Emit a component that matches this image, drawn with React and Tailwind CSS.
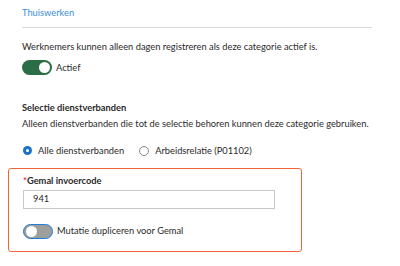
export default function App() {
  return (
    <div className="w-[400px] h-[266px] bg-white text-[#2a2a2a] text-[9.3px] font-['Lato',sans-serif] px-[22px] overflow-hidden">
      <div className="pt-[6px] pb-[7px] border-b border-[#d9d9d9] mr-[6px] leading-[14px]">
        <span className="text-[#3a8ed6]">Thuiswerken</span>
      </div>
      <p className="mt-[12px] leading-[14px]">Werknemers kunnen alleen dagen registreren als deze categorie actief is.</p>
      <div className="mt-[6px] flex items-center gap-[4px]">
        <span className="w-[30px] h-[15px] rounded-full bg-[#2b6e45] flex items-center justify-end pr-[2px]">
          <span className="w-[11px] h-[11px] rounded-full bg-white" />
        </span>
        <span>Actief</span>
      </div>
      <p className="mt-[26px] font-bold leading-[14px]">Selectie dienstverbanden</p>
      <p className="mt-[2px] leading-[14px]">Alleen dienstverbanden die tot de selectie behoren kunnen deze categorie gebruiken.</p>
      <div className="mt-[13px] flex items-center">
        <span className="w-[9px] h-[9px] rounded-full bg-[#1a73c8] flex items-center justify-center ml-[1px]">
          <span className="w-[3px] h-[3px] rounded-full bg-white" />
        </span>
        <span className="ml-[6px]">Alle dienstverbanden</span>
        <span className="ml-[15px] w-[10px] h-[10px] rounded-full border border-[#888] bg-white" />
        <span className="ml-[6px]">Arbeidsrelatie (P01102)</span>
      </div>
      <div className="mt-[10px] -ml-[14px] w-[294px] h-[84px] border border-[#f4623a] rounded-[3px] pl-[14px] pt-[5px]">
        <p className="font-bold leading-[14px]"><span className="text-[#e0314a]">*</span>Gemal invoercode</p>
        <div className="mt-[2px] w-[252px] h-[19px] border border-[#c8c8c8] flex items-center pl-[9px]">941</div>
        <div className="mt-[15px] flex items-center gap-[4px]">
          <span className="w-[30px] h-[15px] rounded-full bg-[#9e9e9e] border-[1.5px] border-[#1e7ed6] flex items-center pl-[1.5px]">
            <span className="w-[11px] h-[11px] rounded-full bg-white" />
          </span>
          <span>Mutatie dupliceren voor Gemal</span>
        </div>
      </div>
    </div>
  );
}
